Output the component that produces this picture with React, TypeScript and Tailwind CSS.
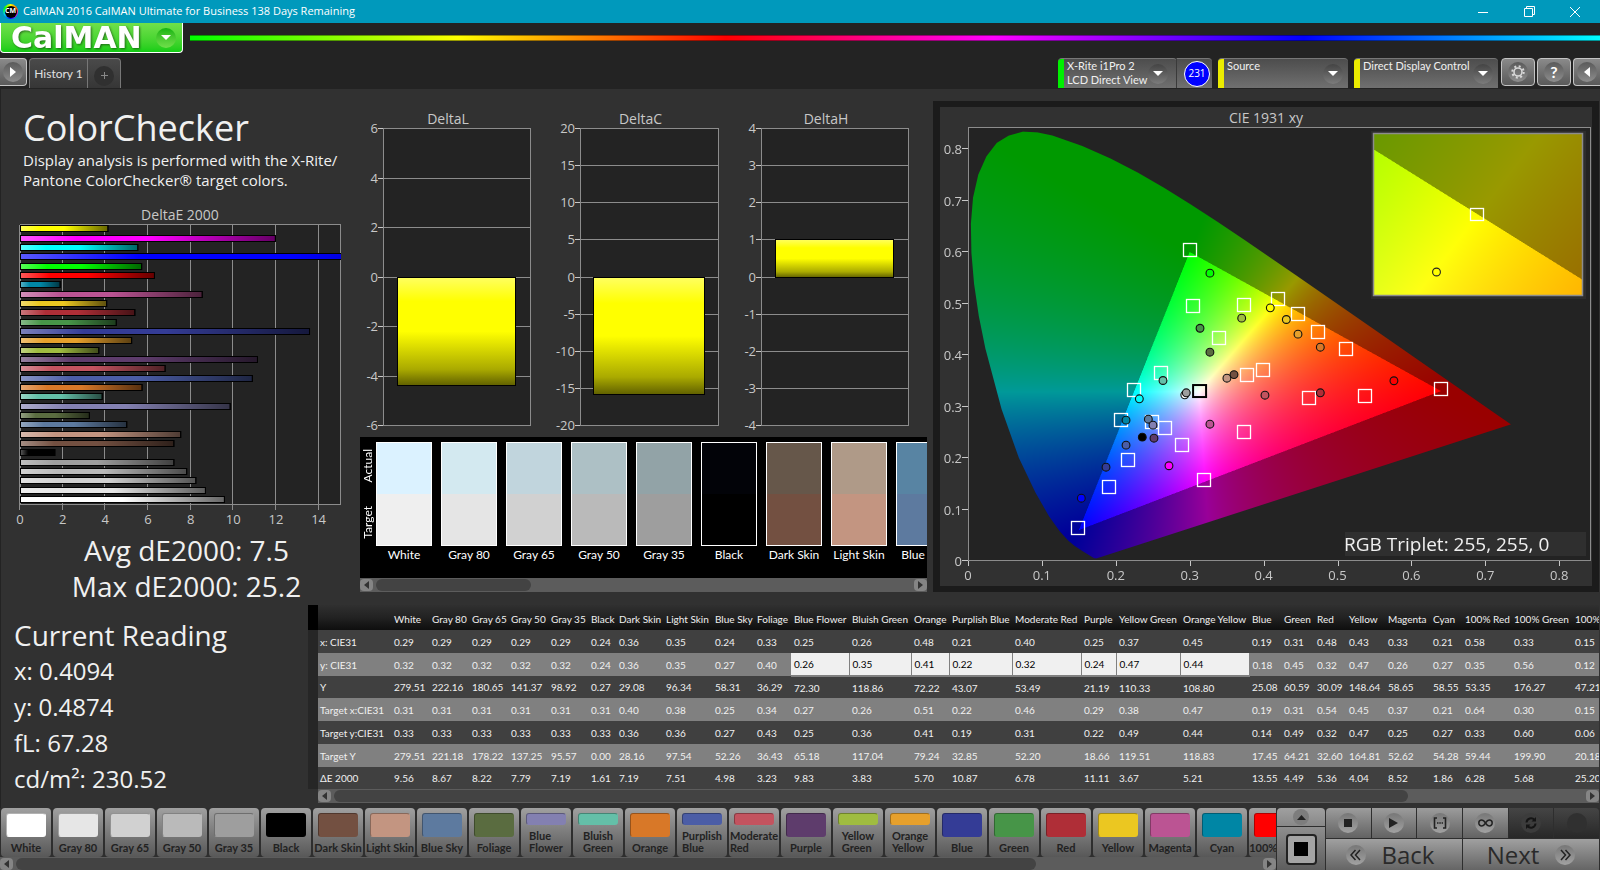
import { useEffect, useRef } from "react";

const patches = [
  { name: "White", color: "#ffffff", actual: "#dbf2ff", target: "#efefef", values: ["0.29", "0.32", "279.51", "0.31", "0.33", "279.51", "9.56"] },
  { name: "Gray 80", color: "#e6e6e6", actual: "#d3e9f0", target: "#e5e5e5", values: ["0.29", "0.32", "222.16", "0.31", "0.33", "221.18", "8.67"] },
  { name: "Gray 65", color: "#d1d1d1", actual: "#c1d5dd", target: "#d1d1d1", values: ["0.29", "0.32", "180.65", "0.31", "0.33", "178.22", "8.22"] },
  { name: "Gray 50", color: "#bababa", actual: "#adc0c5", target: "#bababa", values: ["0.29", "0.32", "141.37", "0.31", "0.33", "137.25", "7.79"] },
  { name: "Gray 35", color: "#9e9e9e", actual: "#92a3a7", target: "#9e9e9e", values: ["0.29", "0.32", "98.92", "0.31", "0.33", "95.57", "7.19"] },
  { name: "Black", color: "#000000", actual: "#020308", target: "#000000", values: ["0.24", "0.24", "0.27", "0.31", "0.33", "0.00", "1.61"] },
  { name: "Dark Skin", color: "#735041", actual: "#66574a", target: "#735041", values: ["0.36", "0.36", "29.08", "0.40", "0.36", "28.16", "7.19"] },
  { name: "Light Skin", color: "#c39581", actual: "#af9a88", target: "#c39581", values: ["0.35", "0.35", "96.34", "0.38", "0.36", "97.54", "7.51"] },
  { name: "Blue Sky", color: "#5d7a9f", actual: "#5884a3", target: "#5d7a9f", values: ["0.24", "0.27", "58.31", "0.25", "0.27", "52.26", "4.98"] },
  { name: "Foliage", color: "#5a6c40", values: ["0.33", "0.40", "36.29", "0.34", "0.43", "36.43", "3.23"] },
  { name: "Blue Flower", color: "#8380b1", values: ["0.25", "0.26", "72.30", "0.27", "0.25", "65.18", "9.83"] },
  { name: "Bluish Green", color: "#64bfa8", values: ["0.26", "0.35", "118.86", "0.26", "0.36", "117.04", "3.83"] },
  { name: "Orange", color: "#d87828", values: ["0.48", "0.41", "72.22", "0.51", "0.41", "79.24", "5.70"] },
  { name: "Purplish Blue", color: "#4b5da6", values: ["0.21", "0.22", "43.07", "0.22", "0.19", "32.85", "10.87"] },
  { name: "Moderate Red", color: "#c3535f", values: ["0.40", "0.32", "53.49", "0.46", "0.31", "52.20", "6.78"] },
  { name: "Purple", color: "#5e3c6c", values: ["0.25", "0.24", "21.19", "0.29", "0.22", "18.66", "11.11"] },
  { name: "Yellow Green", color: "#9fbc40", values: ["0.37", "0.47", "110.33", "0.38", "0.49", "119.51", "3.67"] },
  { name: "Orange Yellow", color: "#e6a02c", values: ["0.45", "0.44", "108.80", "0.47", "0.44", "118.83", "5.21"] },
  { name: "Blue", color: "#343c96", values: ["0.19", "0.18", "25.08", "0.19", "0.14", "17.45", "13.55"] },
  { name: "Green", color: "#479548", values: ["0.31", "0.45", "60.59", "0.31", "0.49", "64.21", "4.49"] },
  { name: "Red", color: "#af2e37", values: ["0.48", "0.32", "30.09", "0.54", "0.32", "32.60", "5.36"] },
  { name: "Yellow", color: "#ebc721", values: ["0.43", "0.47", "148.64", "0.45", "0.47", "164.81", "4.04"] },
  { name: "Magenta", color: "#bb5493", values: ["0.33", "0.26", "58.65", "0.37", "0.25", "52.62", "8.52"] },
  { name: "Cyan", color: "#0086a5", values: ["0.21", "0.27", "58.55", "0.21", "0.27", "54.28", "1.86"] },
  { name: "100% Red", color: "#ff0000", values: ["0.58", "0.35", "53.35", "0.64", "0.33", "59.44", "6.28"] },
  { name: "100% Green", color: "#00ff00", values: ["0.33", "0.56", "176.27", "0.30", "0.60", "199.90", "5.68"] },
  { name: "100% Blue", color: "#0000ff", values: ["0.15", "0.12", "47.21", "0.15", "0.06", "20.18", "25.20"] },
];

const rowLabels = ["x: CIE31", "y: CIE31", "Y", "Target x:CIE31", "Target y:CIE31", "Target Y", "ΔE 2000"];
const columnWidths = [38, 40, 39, 40, 40, 28, 47, 49, 42, 37, 58, 62, 38, 63, 69, 35, 64, 69, 32, 33, 32, 39, 45, 32, 49, 61, 60];

const deltaE = [
  ...patches.map((p) => ({ color: p.color, value: Number(p.values[6]) })),
  { color: "#00ffff", value: 5.5 },
  { color: "#ff00ff", value: 11.95 },
  { color: "#ffff00", value: 4.1 },
].reverse();

// spectral locus, CIE 1931 2 degree observer
const locus = [
  [0.1741, 0.005], [0.1714, 0.0051], [0.1689, 0.0069], [0.1644, 0.0109], [0.1566, 0.0177], [0.144, 0.0297],
  [0.1355, 0.0399], [0.1241, 0.0578], [0.1096, 0.0868], [0.0913, 0.1327], [0.0687, 0.2007], [0.0454, 0.295],
  [0.0235, 0.4127], [0.0146, 0.4757], [0.0082, 0.5384], [0.0046, 0.5986], [0.0039, 0.6548], [0.0068, 0.7057],
  [0.0139, 0.7502], [0.0249, 0.7858], [0.0389, 0.812], [0.055, 0.826], [0.0743, 0.8338], [0.094, 0.8322],
  [0.1142, 0.8262], [0.1547, 0.8059], [0.1929, 0.7816], [0.2296, 0.7543], [0.2658, 0.7243], [0.3016, 0.6923],
  [0.3373, 0.6589], [0.3731, 0.6245], [0.4441, 0.5547], [0.5125, 0.4866], [0.5752, 0.4242], [0.627, 0.3725],
  [0.6658, 0.334], [0.6915, 0.3083], [0.719, 0.2809], [0.7347, 0.2653],
];

const targets = [
  [0.3, 0.602], [0.304, 0.493], [0.374, 0.496], [0.339, 0.431], [0.261, 0.363], [0.224, 0.33], [0.207, 0.271],
  [0.249, 0.267], [0.267, 0.256], [0.29, 0.223], [0.216, 0.194], [0.191, 0.142], [0.149, 0.063], [0.319, 0.156],
  [0.373, 0.249], [0.378, 0.359], [0.399, 0.368], [0.419, 0.507], [0.4465, 0.478], [0.473, 0.443], [0.512, 0.41],
  [0.461, 0.315], [0.537, 0.318], [0.64, 0.333],
];

const readings: [number, number, string][] = [
  [0.326, 0.558, "#00ff00"], [0.3126, 0.451, "#479548"], [0.369, 0.4706, "#9fbc40"], [0.326, 0.4045, "#5a6c40"],
  [0.2625, 0.3495, "#64bfa8"], [0.2305, 0.314, "#00ffff"], [0.2125, 0.2725, "#0086a5"], [0.2427, 0.2744, "#5d7a9f"],
  [0.249, 0.2628, "#8380b1"], [0.2503, 0.2375, "#5e3c6c"], [0.2345, 0.2395, "#000000"], [0.2125, 0.224, "#4b5da6"],
  [0.1854, 0.1812, "#343c96"], [0.2706, 0.184, "#ff00ff"], [0.152, 0.121, "#0000ff"], [0.326, 0.2647, "#bb5493"],
  [0.4005, 0.321, "#c3535f"], [0.292, 0.3217, "#ffffff"], [0.294, 0.3256, "#9e9e9e"], [0.349, 0.354, "#c39581"],
  [0.3586, 0.361, "#735041"], [0.4077, 0.4906, "#ffff00"], [0.4294, 0.468, "#ebc721"], [0.4452, 0.4395, "#e6a02c"],
  [0.4754, 0.4142, "#d87828"], [0.4754, 0.3256, "#af2e37"], [0.575, 0.349, "#ff0000"],
];

type Range = { x0: number; x1: number; y0: number; y1: number };

function Chromaticity({ range, width, height, clip }: { range: Range; width: number; height: number; clip?: boolean }) {
  const ref = useRef<HTMLCanvasElement>(null);

  useEffect(() => {
    const canvas = ref.current;
    const ctx = canvas?.getContext("2d");
    if (!canvas || !ctx) return;
    const w = canvas.width;
    const h = canvas.height;
    const img = ctx.createImageData(w, h);
    for (let j = 0; j < h; j++) {
      const y = range.y1 - ((j + 0.5) / h) * (range.y1 - range.y0);
      for (let i = 0; i < w; i++) {
        const x = range.x0 + ((i + 0.5) / w) * (range.x1 - range.x0);
        const z = 1 - x - y;
        const r = 3.2406 * x - 1.5372 * y - 0.4986 * z;
        const g = -0.9689 * x + 1.8758 * y + 0.0415 * z;
        const b = 0.0557 * x - 0.204 * y + 1.057 * z;
        // colors outside the Rec.709 triangle are dimmed
        const level = r < 0 || g < 0 || b < 0 ? 153 : 255;
        const k = level / Math.max(r, g, b);
        const p = (j * w + i) * 4;
        img.data[p] = r * k;
        img.data[p + 1] = g * k;
        img.data[p + 2] = b * k;
        img.data[p + 3] = 255;
      }
    }
    ctx.putImageData(img, 0, 0);
    if (clip) {
      ctx.globalCompositeOperation = "destination-in";
      ctx.beginPath();
      locus.forEach(([x, y]) => {
        ctx.lineTo(((x - range.x0) / (range.x1 - range.x0)) * w, ((range.y1 - y) / (range.y1 - range.y0)) * h);
      });
      ctx.closePath();
      ctx.fill();
    }
  }, [range, clip]);

  return <canvas ref={ref} width={width * 2} height={height * 2} className="block h-full w-full" />;
}

const fullRange = { x0: 0, x1: 0.8417, y0: 0, y1: 0.8408 };
const insetRange = { x0: 0.3941, x1: 0.4447, y0: 0.4802, y1: 0.5304 };

function CieChart() {
  const px = (x: number) => 28 + x * 739;
  const py = (y: number) => 454 - y * 515;

  return (
    <svg viewBox="0 0 652 479" className="block w-full" fontSize="13" fill="#c8c8c8">
      <text x="326" y="16" fontSize="14" textAnchor="middle">CIE 1931 xy</text>
      <rect x="28.5" y="20.5" width="622" height="433" fill="#232323" />
      <foreignObject x="28" y="21" width="622" height="433">
        <Chromaticity range={fullRange} width={622} height={433} clip />
      </foreignObject>
      <rect x="28.5" y="20.5" width="622" height="433" fill="none" stroke="#8c8c8c" />
      {[0, 1, 2, 3, 4, 5, 6, 7, 8].map((n) => (
        <g key={n}>
          <path d={`M22 ${Math.round(py(n / 10)) - 0.5}h6M${Math.round(px(n / 10)) + 0.5} 454v5`} stroke="#c8c8c8" />
          <text x="22" y={py(n / 10) + 5} textAnchor="end">{n / 10}</text>
          <text x={px(n / 10)} y="473" textAnchor="middle">{n / 10}</text>
        </g>
      ))}
      {targets.map(([x, y]) => (
        <rect key={`${x}-${y}`} x={Math.round(px(x)) - 6.5} y={Math.round(py(y)) - 7.5} width="13" height="13" fill="none" stroke="#fff" strokeWidth="1.3" />
      ))}
      {readings.map(([x, y, color]) => (
        <circle key={`${x}-${y}`} cx={px(x) + 1} cy={py(y) - 0.5} r="3.9" fill={color} stroke="#111" strokeWidth="1.1" />
      ))}
      <rect x={px(0.3127) - 6} y={py(0.33) - 6} width="13" height="12" fill="none" stroke="#000" strokeWidth="2" />
      {/* zoomed inset around the selected patch */}
      <rect x="431" y="24" width="215" height="168" fill="#2d2d2d" />
      <foreignObject x="434" y="26" width="209" height="163">
        <Chromaticity range={insetRange} width={209} height={163} />
      </foreignObject>
      <rect x="433.5" y="26.5" width="209" height="162" fill="none" stroke="#8c8c8c" strokeWidth="1.5" />
      <rect x="530.5" y="101.5" width="13" height="12" fill="none" stroke="#fff" strokeWidth="1.3" />
      <circle cx="496.5" cy="165" r="3.9" fill="#ffff00" stroke="#222" strokeWidth="1.1" />
      <rect x="405" y="425" width="241" height="24" fill="#2f2f2f" />
      <text x="404" y="444" fontSize="19" fill="#f0f0f0">RGB Triplet: 255, 255, 0</text>
    </svg>
  );
}

function DeltaEChart() {
  const px = (v: number) => 20 + v * 21.33;

  return (
    <svg width="354" height="324" className="block" fontSize="13" fill="#c8c8c8">
      <defs>
        <linearGradient id="gloss-x">
          <stop offset="0" stopColor="#fff" stopOpacity="0.35" />
          <stop offset="0.22" stopColor="#fff" stopOpacity="0" />
          <stop offset="0.5" stopColor="#000" stopOpacity="0" />
          <stop offset="1" stopColor="#000" stopOpacity="0.6" />
        </linearGradient>
        <clipPath id="delta-e-plot">
          <rect x="20" y="18" width="321" height="281" />
        </clipPath>
      </defs>
      <text x="180" y="14" fontSize="14" textAnchor="middle">DeltaE 2000</text>
      <rect x="20.5" y="18.5" width="320" height="280" fill="#232323" stroke="#8c8c8c" />
      {[0, 2, 4, 6, 8, 10, 12, 14].map((n) => (
        <g key={n}>
          <path d={`M${Math.round(px(n)) - 0.5} 19v285`} stroke="#8c8c8c" />
          <text x={px(n)} y="318" textAnchor="middle">{n}</text>
        </g>
      ))}
      <g clipPath="url(#delta-e-plot)">
        {deltaE.map((bar, i) => (
          <g key={i} stroke="#000">
            <rect x="20.5" y={Math.round(19.2 + i * 9.34) + 0.5} width={bar.value * 21.33} height="6" fill={bar.color} />
            <rect x="20.5" y={Math.round(19.2 + i * 9.34) + 0.5} width={bar.value * 21.33} height="6" fill="url(#gloss-x)" />
          </g>
        ))}
      </g>
    </svg>
  );
}

function DeltaChart({ title, max, step, value, left, width }: { title: string; max: number; step: number; value: number; left: number; width: number }) {
  const py = (v: number) => 23 + ((max - v) / (max * 2)) * 297;
  const ticks: number[] = [];
  for (let v = max; v >= -max; v -= step) ticks.push(v);
  const pad = Math.round(width * 0.1);
  const top = Math.round(py(Math.max(value, 0)));
  const bottom = Math.round(py(Math.min(value, 0)));

  return (
    <svg width={left + width + 1} height="332" className="block" fontSize="13" fill="#c8c8c8">
      <defs>
        <linearGradient id={`gloss-${title}`} x2="0" y2="1">
          <stop offset="0" stopColor="#ffff60" />
          <stop offset="0.22" stopColor="#ffff00" />
          <stop offset="0.5" stopColor="#ffff00" />
          <stop offset="0.85" stopColor="#aaaa00" />
          <stop offset="1" stopColor="#606000" />
        </linearGradient>
      </defs>
      <text x={left + width / 2 - 9} y="19" fontSize="14" textAnchor="middle">{title}</text>
      <rect x={left + 0.5} y="23.5" width={width - 1} height="297" fill="#232323" stroke="#8c8c8c" />
      {ticks.map((v) => (
        <g key={v}>
          <path d={`M${left} ${Math.round(py(v)) + 0.5}h${width}`} stroke="#8c8c8c" />
          <path d={`M${left - 5} ${Math.round(py(v)) + 0.5}h5`} stroke="#c8c8c8" />
          <text x={left - 5} y={py(v) + 5} textAnchor="end">{v}</text>
        </g>
      ))}
      <rect x={left + pad - 0.5} y={top + 0.5} width={width - pad * 2} height={bottom - top} fill={`url(#gloss-${title})`} stroke="#000" />
    </svg>
  );
}

function Scrollbar({ thumb }: { thumb: string }) {
  return (
    <div className="flex h-[14px] items-center bg-[#5c5c5c]">
      <button aria-label="Scroll left" className="flex h-3 w-[13px] items-center justify-center rounded-sm bg-[#858585]">
        <svg width="5" height="8" fill="#333"><path d="M5 0v8L0 4z" /></svg>
      </button>
      <div className="mx-[3px] h-3 flex-1">
        <div className="h-3 rounded-full bg-[#434343]" style={{ width: thumb }} />
      </div>
      <button aria-label="Scroll right" className="flex h-3 w-[13px] items-center justify-center rounded-sm bg-[#858585]">
        <svg width="5" height="8" fill="#333"><path d="M0 0v8l5-4z" /></svg>
      </button>
    </div>
  );
}

function TitleBar() {
  return (
    <div className="flex h-[23px] items-center bg-[#0099bc] pr-[2px] pl-[3px] font-['Open_Sans',sans-serif] text-white">
      <span className="flex size-[15px] items-center justify-center rounded-full bg-[conic-gradient(#ff0,#f60,#f0f,#00f,#0cf,#0f0,#ff0)]">
        <span className="flex size-3 items-center justify-center rounded-full bg-black text-[7px] font-bold">CM</span>
      </span>
      <span className="ml-[5px] text-[11px]">CalMAN 2016 CalMAN Ultimate for Business 138 Days Remaining</span>
      <div className="ml-auto flex h-full items-center">
        <button aria-label="Minimize" className="flex w-[46px] justify-center">
          <svg width="10" height="10" stroke="#fff"><path d="M0 5.5h10" /></svg>
        </button>
        <button aria-label="Restore" className="flex w-[46px] justify-center">
          <svg width="11" height="11" fill="none" stroke="#fff"><path d="M.5 2.5h8v8h-8zM2.5 2.5v-2h8v8h-2" /></svg>
        </button>
        <button aria-label="Close" className="flex w-[46px] justify-center">
          <svg width="10" height="10" stroke="#fff"><path d="M0 0l10 10M10 0L0 10" /></svg>
        </button>
      </div>
    </div>
  );
}

function Caret() {
  return (
    <span className="flex size-5 shrink-0 items-center justify-center rounded-full bg-linear-to-b from-[#444] to-[#7c7c7c]">
      <svg width="10" height="5" fill="#fff"><path d="M0 0h10L5 5z" /></svg>
    </span>
  );
}

function DeviceTab({ lines, size, strip }: { lines: string[]; size: string; strip: string }) {
  return (
    <button className={`flex h-[30px] items-stretch overflow-hidden rounded-t-[4px] border-t border-[#777] bg-linear-to-b from-[#4d4d4d] to-[#707070] text-left text-[11px] leading-[14px] text-[#f0f0f0] ${size}`}>
      <span className={`mr-[3px] w-[6px] shrink-0 ${strip}`} />
      <span className="flex-1 whitespace-nowrap">
        {lines.map((line) => <span key={line} className="block">{line}</span>)}
      </span>
      <span className="flex items-center"><Caret /></span>
    </button>
  );
}

const squareButton = "flex h-7 w-[34px] items-center justify-center rounded-[4px] border border-[#c4c4c4] bg-linear-to-b from-[#8a8a8a] to-[#5a5a5a]";
const roundFace = "flex size-5 items-center justify-center rounded-full bg-linear-to-b from-[#5a5a5a] to-[#8e8e8e]";

function Header() {
  return (
    <header className="bg-[#232323]">
      <div className="flex h-[35px]">
        <button className="flex h-[30px] w-[183px] items-center justify-between rounded-b-[4px] border border-t-0 border-white bg-linear-to-b from-[#6fe04a] to-[#0fcd14] pr-[6px] pl-[10px]">
          <span className="font-['DejaVu_Sans',sans-serif] text-[30px] leading-[28px] font-bold text-white drop-shadow-[1px_1px_1px_rgba(0,0,0,0.5)]">CalMAN</span>
          <span className="flex size-5 items-center justify-center rounded-full bg-linear-to-b from-[#0cb40f] to-[#6fe04a]">
            <svg width="10" height="5" fill="#fff"><path d="M0 0h10L5 5z" /></svg>
          </span>
        </button>
        <div className="mt-3 ml-[7px] h-[6px] flex-1 border-y border-black/40 bg-[linear-gradient(90deg,#0f0,#ff0_19%,#f00_38%,#f0f_57%,#00f_79%,#0ff)]" />
      </div>
      <div className="flex h-[31px] items-start">
        <button aria-label="Show workflow" className="flex h-7 w-[27px] items-center rounded-r-[4px] border border-l-0 border-[#c4c4c4] bg-linear-to-b from-[#8a8a8a] to-[#5a5a5a] pl-[3px]">
          <span className={roundFace}><svg width="6" height="10" fill="#fff"><path d="M0 0v10l6-5z" /></svg></span>
        </button>
        <button className="ml-[2px] h-[30px] w-[59px] rounded-tl-[4px] border border-b-0 border-[#777] bg-linear-to-b from-[#4a4a4a] to-[#363636] text-[12px] text-[#e0e0e0]">History 1</button>
        <button aria-label="Add tab" className="flex h-[30px] w-[33px] items-center justify-center rounded-tr-[4px] border border-b-0 border-l-0 border-[#777] bg-linear-to-b from-[#4a4a4a] to-[#363636]">
          <span className="mt-1 flex size-5 items-center justify-center rounded-full bg-[#303030]">
            <svg width="7" height="7" stroke="#888"><path d="M0 3.5h7M3.5 0v7" /></svg>
          </span>
        </button>
        <div className="ml-auto flex">
          <DeviceTab lines={["X-Rite i1Pro 2", "LCD Direct View"]} size="w-[119px] pr-[9px]" strip="bg-[#00f000]" />
          <span className="mr-[6px] -ml-px flex h-[30px] w-9 items-center justify-center rounded-tr-[4px] border-t border-l border-t-[#777] border-l-[#3a3a3a] bg-linear-to-b from-[#4d4d4d] to-[#707070] pl-[5px]">
            <span className="flex size-[26px] items-center justify-center rounded-full border border-white bg-[#0000ff] font-['Open_Sans',sans-serif] text-[10px] text-white">231</span>
          </span>
          <DeviceTab lines={["Source"]} size="w-[130px] pr-[5px]" strip="bg-[#ecec00]" />
          <span className="w-[6px]" />
          <DeviceTab lines={["Direct Display Control"]} size="w-[144px] pr-[5px]" strip="bg-[#ecec00]" />
        </div>
        <div className="ml-[3px] flex gap-[2px]">
          <button aria-label="Settings" className={squareButton}>
            <span className={roundFace}>
              <svg width="16" height="16" viewBox="0 0 16 16" fill="none" stroke="#d8d8d8">
                <circle cx="8" cy="8" r="4" strokeWidth="1.6" />
                <circle cx="8" cy="8" r="5.7" strokeWidth="2" strokeDasharray="2 2.48" />
              </svg>
            </span>
          </button>
          <button aria-label="Help" className={squareButton}>
            <span className={`${roundFace} text-[16px] font-bold text-white`}>?</span>
          </button>
          <button aria-label="Collapse" className="flex h-7 w-[27px] items-center justify-end rounded-l-[4px] border border-r-0 border-[#c4c4c4] bg-linear-to-b from-[#8a8a8a] to-[#5a5a5a] pr-[3px]">
            <span className={roundFace}><svg width="6" height="10" fill="#fff"><path d="M6 0v10L0 5z" /></svg></span>
          </button>
        </div>
      </div>
    </header>
  );
}

function SwatchPanel() {
  return (
    <div className="mr-[6px] bg-black">
      <div className="flex h-[141px] overflow-hidden pt-[5px] text-[12px] leading-[14px] text-white">
        <div className="flex h-[104px] w-4 shrink-0 flex-col items-center justify-between py-[7px]">
          <span className="rotate-180 [writing-mode:vertical-rl]">Actual</span>
          <span className="rotate-180 [writing-mode:vertical-rl]">Target</span>
        </div>
        <div className="flex min-w-0 flex-1 gap-[9px] overflow-hidden">
          {patches.slice(0, 9).map((p) => (
            <div key={p.name} className="w-14 shrink-0 text-center whitespace-nowrap">
              <div className="h-[104px] border border-white">
                <div className="h-[51px]" style={{ background: p.actual }} />
                <div className="h-[51px]" style={{ background: p.target }} />
              </div>
              <div className="-mx-1 mt-[2px]">{p.name}</div>
            </div>
          ))}
        </div>
      </div>
      <Scrollbar thumb="29%" />
    </div>
  );
}

function ReadingTable() {
  return (
    <div className="min-w-0 flex-1 overflow-hidden">
      <table className="w-[1300px] table-fixed border-collapse text-[10px] leading-[14px] whitespace-nowrap text-[#f0f0f0]">
        <colgroup>
          <col style={{ width: 10 }} />
          <col style={{ width: 73 }} />
          {columnWidths.map((w, i) => <col key={i} style={{ width: w }} />)}
        </colgroup>
        <thead>
          <tr className="h-[25px] bg-linear-to-b from-[#303030] via-[#222] to-[#0e0e0e] text-left">
            <th className="bg-black" />
            <th />
            {patches.map((p) => <th key={p.name} className="p-0 pt-[2px] pl-[3px] font-normal">{p.name}</th>)}
          </tr>
        </thead>
        <tbody>
          {rowLabels.map((label, row) => (
            <tr key={label} className={`${row % 4 === 2 ? "h-[22px]" : "h-[23px]"} ${row % 2 ? "bg-[#808080]" : "bg-[#404040]"}`}>
              <td className="bg-[#262626] p-0" />
              <th scope="row" className="p-0 pl-[2px] text-left font-normal">{label}</th>
              {patches.map((p, i) => (
                <td
                  key={p.name}
                  className={row === 1 && i >= 10 && i <= 17 ? "border-r border-b-2 border-[#808080] bg-[#f0f0f0] p-0 pl-[3px] text-black" : "p-0 pl-[3px]"}
                >
                  {p.values[row]}
                </td>
              ))}
            </tr>
          ))}
        </tbody>
      </table>
      <div className="ml-[10px]"><Scrollbar thumb="86%" /></div>
    </div>
  );
}

function PatchStrip() {
  return (
    <div className="min-w-0 flex-1 overflow-hidden">
      <div className="flex h-[49px] gap-[2px] overflow-hidden pl-px">
        {patches.slice(0, 25).map((p) => {
          const twoLines = p.name.includes(" ") && p.name.length > 10;
          return (
            <button key={p.name} className="flex w-[50px] shrink-0 flex-col items-center rounded-[4px] bg-linear-to-b from-[#a0a0a0] to-[#585858] pt-[5px] text-[11px] leading-[12px] font-bold text-[#222]">
              <span
                className={`w-10 shrink-0 rounded-[3px] border border-t-black/30 border-r-transparent border-b-transparent border-l-black/30 ${twoLines ? "h-3" : "h-6"}`}
                style={{ backgroundColor: p.color }}
              />
              <span className={`mt-auto mb-[3px] text-left ${twoLines ? "" : "whitespace-nowrap"}`}>
                {twoLines ? p.name.split(" ").map((w) => <span key={w} className="block">{w}</span>) : p.name}
              </span>
            </button>
          );
        })}
      </div>
      <Scrollbar thumb="82%" />
    </div>
  );
}

const controlFace = "flex size-5 items-center justify-center rounded-full bg-linear-to-b from-[#777] to-[#a2a2a2]";
const controlButton = "flex h-[30px] items-center justify-center bg-linear-to-b from-[#9c9c9c] to-[#636363]";
const darkButton = "flex h-[30px] items-center justify-center bg-linear-to-b from-[#454545] to-[#282828]";

function Controls() {
  return (
    <div className="flex w-[324px] shrink-0 gap-px pr-px pl-px">
      <div className="flex w-12 flex-col gap-px">
        <button aria-label="Expand" className="flex h-[18px] items-center justify-center rounded-t-[4px] bg-linear-to-b from-[#a0a0a0] to-[#888]">
          <span className="flex size-4 items-center justify-center rounded-full bg-[#7d7d7d]">
            <svg width="9" height="5" fill="#222"><path d="M0 5h9L4.5 0z" /></svg>
          </span>
        </button>
        <button aria-label="Pattern window" className="flex flex-1 items-center justify-center bg-linear-to-b from-[#8e8e8e] to-[#5c5c5c]">
          <span className="flex size-[31px] items-center justify-center rounded-[4px] border-2 border-[#222] bg-[#a4a4a4]">
            <span className="size-[14px] bg-black" />
          </span>
        </button>
      </div>
      <div className="flex flex-1 flex-col gap-px">
        <div className="grid grid-cols-6 gap-px">
          <button aria-label="Stop" className={`${controlButton} rounded-tl-[4px]`}>
            <span className={controlFace}><span className="size-2 bg-[#222]" /></span>
          </button>
          <button aria-label="Play" className={controlButton}>
            <span className={controlFace}><svg width="9" height="10" fill="#222"><path d="M0 0v10l9-5z" /></svg></span>
          </button>
          <button aria-label="Read series" className={controlButton}>
            <span className={controlFace}>
              <svg width="14" height="12" fill="none" stroke="#222" strokeWidth="1.6"><path d="M4 1H1.5v10H4M10 1h2.5v10H10" /><path d="M4 6h6" strokeDasharray="1.5 .8" /></svg>
            </span>
          </button>
          <button aria-label="Read continuous" className={controlButton}>
            <span className={controlFace}>
              <svg width="15" height="8" fill="none" stroke="#222" strokeWidth="1.5"><path d="M7.5 4C6 1.5 5 1 3.8 1a3 3 0 000 6C5 7 6 6.500 7.5 4S10 1 11.2 1a3 3 0 010 6C10 7 9 6.500 7.5 4z" /></svg>
            </span>
          </button>
          <button aria-label="Refresh" className={darkButton}>
            <span className="flex size-5 items-center justify-center rounded-full bg-[#3c3c3c]">
              <svg width="12" height="12" fill="none" stroke="#151515" strokeWidth="2"><path d="M1.5 5.5A4.5 4.5 0 019.5 3M10.5 6.5A4.5 4.5 0 012.5 9" /><path d="M11 0v4.5H6.5zM1 12V7.5h4.5z" fill="#151515" stroke="none" /></svg>
            </span>
          </button>
          <button aria-label="Record" className={`${darkButton} rounded-tr-[4px]`}>
            <span className="size-5 rounded-full bg-[#303030]" />
          </button>
        </div>
        <div className="grid flex-1 grid-cols-2 gap-px font-['Open_Sans',sans-serif] text-[24px] leading-[30px] text-[#2a2a2a]">
          <button className="flex items-center justify-center gap-4 bg-linear-to-b from-[#a0a0a0] to-[#636363] pr-2">
            <span className={controlFace}><svg width="11" height="12" fill="none" stroke="#222" strokeWidth="1.5"><path d="M5.5 1L1 6l4.500 5M10 1L5.5 6l4.500 5" /></svg></span>
            Back
          </button>
          <button className="flex items-center justify-center gap-4 bg-linear-to-b from-[#a0a0a0] to-[#636363]">
            Next
            <span className={controlFace}><svg width="11" height="12" fill="none" stroke="#222" strokeWidth="1.5"><path d="M1 1l4.500 5L1 11M5.5 1L10 6l-4.500 5" /></svg></span>
          </button>
        </div>
      </div>
    </div>
  );
}

export default function App() {
  return (
    <div className="min-h-screen w-full overflow-hidden bg-[#232323] font-['Lato',sans-serif] text-[#f0f0f0]">
      <TitleBar />
      <Header />
      <main className="ml-px bg-[#313131]">
        <div className="flex h-[516px] items-start pr-px">
          <section className="w-[353px] shrink-0">
            <div className="pt-[17px] pl-[22px] font-['Open_Sans',sans-serif]">
              <h1 className="text-[36px] leading-[44px]">ColorChecker</h1>
              <p className="text-[15px] leading-5 whitespace-nowrap">
                Display analysis is performed with the X-Rite/<br />Pantone ColorChecker® target colors.
              </p>
            </div>
            <div className="mt-4 -ml-px font-['Open_Sans',sans-serif]"><DeltaEChart /></div>
            <div className="w-[371px] pt-[2px] text-center font-['Open_Sans',sans-serif] text-[28px] leading-9">
              <p>Avg dE2000: 7.5</p>
              <p>Max dE2000: 25.2</p>
            </div>
          </section>
          <section className="w-[579px] shrink-0 pt-4">
            <div className="flex w-[556px] justify-between font-['Open_Sans',sans-serif]">
              <DeltaChart title="DeltaL" max={6} step={2} value={-4.4} left={29} width={148} />
              <DeltaChart title="DeltaC" max={20} step={5} value={-15.8} left={36} width={139} />
              <DeltaChart title="DeltaH" max={4} step={1} value={1} left={29} width={148} />
            </div>
            <div className="ml-[6px]"><SwatchPanel /></div>
          </section>
          <section className="mt-3 min-w-0 flex-1 border-[7px] border-t-[6px] border-b-[6px] border-[#1b1b1b] bg-[#313131] font-['Open_Sans',sans-serif]">
            <CieChart />
          </section>
        </div>
        <div className="flex h-[203px] pr-px">
          <section className="w-[307px] shrink-0 pt-3 pl-[13px] font-['Open_Sans',sans-serif] text-[24px] leading-9">
            <h2 className="text-[28px]">Current Reading</h2>
            <p>x: 0.4094</p>
            <p>y: 0.4874</p>
            <p>fL: 67.28</p>
            <p>cd/m²: 230.52</p>
          </section>
          <ReadingTable />
        </div>
      </main>
      <footer className="flex bg-[#2e2e2e]">
        <PatchStrip />
        <Controls />
      </footer>
    </div>
  );
}
